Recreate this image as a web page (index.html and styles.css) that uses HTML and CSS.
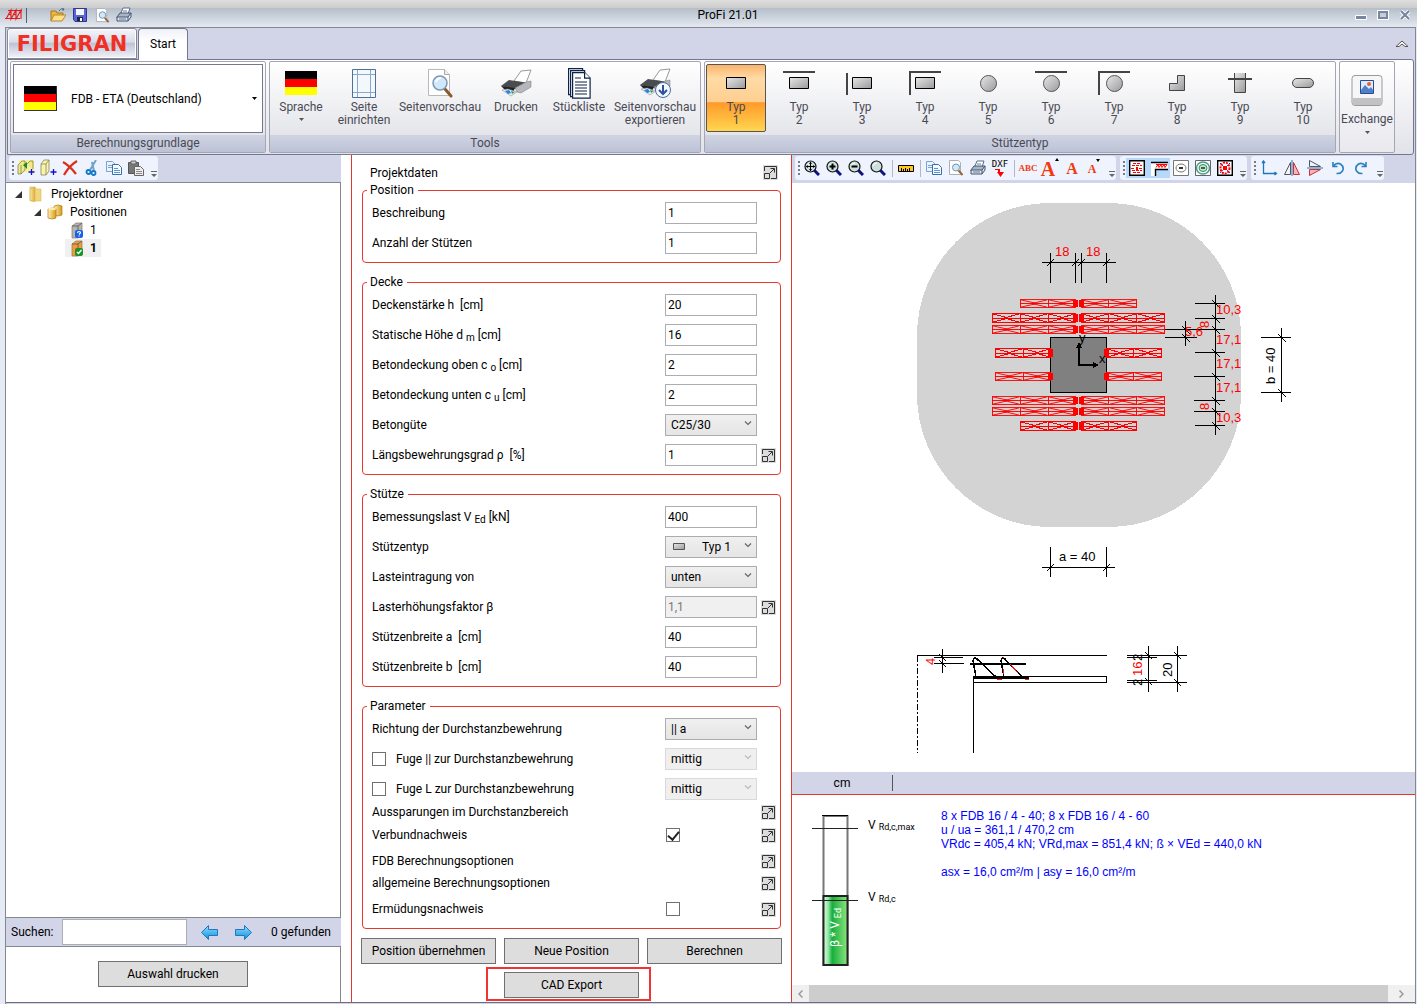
FILE: index.html
```html
<!DOCTYPE html>
<html lang="de">
<head>
<meta charset="utf-8">
<title>ProFi 21.01</title>
<link rel="stylesheet" href="styles.css">
</head>
<body>
<svg class="defs" aria-hidden="true">
  <defs>
    <linearGradient id="steel" x1="0" y1="0" x2="1" y2="1"><stop offset="0" stop-color="#e8e8e8"/><stop offset="1" stop-color="#999"/></linearGradient>
    <linearGradient id="gold" x1="0" x2="1"><stop offset="0" stop-color="#fff0b0"/><stop offset="1" stop-color="#d79a1c"/></linearGradient>
    <linearGradient id="bluearrow" x1="0" y1="0" x2="0" y2="1"><stop offset="0" stop-color="#8edcff"/><stop offset="1" stop-color="#0d8fe0"/></linearGradient>
    <linearGradient id="green" x1="0" x2="1"><stop offset="0" stop-color="#e2ffe8"/><stop offset=".2" stop-color="#8fe8a0"/><stop offset=".36" stop-color="#18ae3e"/><stop offset="1" stop-color="#8be57d"/></linearGradient>
  </defs>
  <symbol id="flag" viewBox="0 0 32 24"><path fill="#000" d="M0 0h32v8H0z"/><path fill="red" d="M0 8h32v8H0z"/><path fill="#ff0" d="M0 16h32v8H0z"/></symbol>
  <symbol id="expand" viewBox="0 0 15 15"><path fill="#dcdcdc" d="M0 0h15v15H0z"/><path fill="none" stroke="#333" d="M1.500 6V1.500h12v12H8M1.500 8.500h5v5h-5zM7 8l4-4M7.500 3.500h4v4"/></symbol>
  <symbol id="chev" viewBox="0 0 8 5"><path fill="none" stroke="currentColor" stroke-width="1.200" d="M1 .5l3 3 3-3"/></symbol>
  <symbol id="print" viewBox="0 0 16 16"><path fill="#fff" stroke="#5b6d85" d="M5 6l2-5h7l-2 6"/><path fill="#a8b6c9" stroke="#45566e" d="M1 10l3-4h11l-3 5H1z"/><path fill="#dbe4f0" stroke="#45566e" d="M1 10h11v4H1zM12 10l3-4v4l-3 4"/><path stroke="#6b7d94" d="M7 4h4M3 12h7"/></symbol>
  <symbol id="preview" viewBox="0 0 16 16"><path fill="#fff" stroke="#aab0ba" d="M1.500.5h9l2 2v12h-11z"/><circle cx="8" cy="7.500" r="3.500" fill="#cfe8fa" stroke="#7b93ab"/><path stroke="#9a6235" stroke-width="2" d="M10.500 10.500l4 4.500"/></symbol>
  <symbol id="copy" viewBox="0 0 16 16"><path fill="#eaf4ff" stroke="#7aa4cf" d="M.5 1.500h6l3 3v7h-9z"/><path stroke="#7aa4cf" d="M2 5.500h4M2 7.500h4"/><path fill="#f4faff" stroke="#386fae" d="M6.500 4.500h6l3 3v7h-9z"/><path stroke="#5f94cc" d="M8 8.500h4M8 10.500h6M8 12.500h6"/></symbol>
  <symbol id="lens" viewBox="0 0 16 16"><path stroke="#10108a" stroke-width="3" d="M10 10l5 5"/><circle cx="6.500" cy="6.500" r="5.500" fill="#cde0de" stroke="#111" stroke-width="1.200"/><path fill="none" stroke="#fff" d="M3 6q1-3 4-3"/></symbol>
  <symbol id="bigprint" viewBox="0 0 32 28"><path fill="#fff" stroke="#999" d="M14 12l7-10 10-1-5 13z"/><path fill="#4a4c50" d="M1 17l8-6 19 3-2 4-11 2z"/><path fill="#202226" d="M1 17l14 2-2 4-7-1z"/><path fill="#b4b8bd" stroke="#777" stroke-width=".5" d="M15 19l11-6 5-1v6l-10 6-4-1z"/><path fill="#e3edf7" stroke="#889" stroke-width=".5" d="M2 21l6-1 9 3-6 4z"/><path fill="#2585d8" d="M5 22l4-1 2 3-3 1z"/><path fill="#4a9c4b" d="M11 22l4 1-3 2z"/></symbol>
  <symbol id="vbox" viewBox="0 0 15 17"><path fill="currentColor" stroke="#8a7a55" stroke-width=".7" d="M2 4l4-3h6v12l-4 3H2z"/><path fill="none" stroke="#555" stroke-width=".8" d="M2 4h6v12M8 4l4-3"/></symbol>
  <symbol id="cell" viewBox="0 0 28 10" preserveAspectRatio="none"><path fill="none" stroke="red" d="M0 .5h28M0 9.500h28M0 5h28M.5 0v10M1 1l14 3.500M1 9l14-3.500M27 1L12 5l15 4"/></symbol>
  <symbol id="g2" viewBox="0 0 58 10" preserveAspectRatio="none"><use href="#cell" width="28" height="10"/><use href="#cell" x="28" width="28" height="10"/><path fill="red" d="M53 1h5v8h-5z"/></symbol>
  <symbol id="g3" viewBox="0 0 86 10" preserveAspectRatio="none"><use href="#cell" width="28" height="10"/><use href="#cell" x="28" width="28" height="10"/><use href="#cell" x="56" width="28" height="10"/><path fill="red" d="M81 1h5v8h-5z"/></symbol>
</svg>

<div class="app">
  <header class="titlebar">
    <div class="quick">
      <svg width="18" height="14" viewBox="0 0 18 14"><path fill="none" stroke="#e81818" stroke-width="1.100" d="M3 2.500h14M0 10.500h15M1 11L6 2v9l5-9v9l5-9v9M3 6l3 1M8 6l3 1"/></svg>
      <span class="vline"></span>
      <button class="tool first" aria-label="Öffnen"><svg width="16" height="16" viewBox="0 0 16 16"><path fill="#f0b63a" stroke="#a8741a" d="M1 14V4h5l1 2h6v3"/><path fill="#ffe08a" stroke="#b98a2c" d="M1 14l3-6h12l-4 6z"/><path fill="none" stroke="#47688f" d="M9 4q3-4 5-1l-1-2m1 2h-2"/></svg></button>
      <button class="tool" aria-label="Speichern"><svg width="14" height="14" viewBox="0 0 14 14"><path fill="#5a66d8" stroke="#2f3690" d="M.5.5h13v13H2l-1.500-2z"/><path fill="#f4f6ff" d="M3 1h8v6H3z"/><path fill="#23263f" d="M4 9h6v4H4z"/><path fill="#fff" d="M7 10h2v3H7z"/></svg></button>
      <button class="tool" aria-label="Vorschau"><svg width="15" height="15"><use href="#preview"/></svg></button>
      <button class="tool" aria-label="Drucken"><svg width="16" height="16"><use href="#print"/></svg></button>
    </div>
    <h1>ProFi 21.01</h1>
    <div class="winbtns">
      <button aria-label="Minimieren"><svg width="12" height="10" viewBox="0 0 12 10"><path fill="#76879f" stroke="#fff" d="M.5 5.500h11v4H.5z"/></svg></button>
      <button aria-label="Maximieren"><svg width="12" height="10" viewBox="0 0 12 10"><path fill="none" stroke="#76879f" stroke-width="2" d="M2 2h8v6H2z"/><path fill="none" stroke="#fff" d="M.5.5h11v9H.5z"/></svg></button>
      <button aria-label="Schließen"><svg width="12" height="10" viewBox="0 0 12 10"><path stroke="#fff" stroke-width="4" d="M2 1l8 8M10 1L2 9"/><path stroke="#76879f" stroke-width="2.200" d="M2 1l8 8M10 1L2 9"/></svg></button>
    </div>
  </header>

  <div class="frame">
    <nav class="tabs">
      <button class="logo">FILIGRAN</button>
      <button class="tab">Start</button>
      <button class="collapse" aria-label="Menüband einklappen"><svg width="14" height="8" viewBox="0 0 14 8"><path fill="#fff" stroke="#555" d="M1 6.500l6-5.500 6 5.500h-3L7 4 4 6.500z"/></svg></button>
    </nav>

    <div class="ribbon">
      <section class="group base">
        <div class="flagselect">
          <svg class="flag" width="33" height="25"><use href="#flag"/></svg>
          <select aria-label="Berechnungsgrundlage"><option>FDB - ETA (Deutschland)</option></select>
          <svg class="tri" width="5" height="3"><path d="M0 0h5L2.500 3z"/></svg>
        </div>
        <h2>Berechnungsgrundlage</h2>
      </section>

      <section class="group tools">
        <div class="items">
          <button class="big"><span class="pic"><svg width="32" height="24"><use href="#flag"/></svg></span><span>Sprache</span><svg class="tri" width="5" height="3"><path fill="#555" d="M0 0h5L2.500 3z"/></svg></button>
          <button class="big"><span class="pic"><svg width="24" height="29" viewBox="0 0 24 29"><path fill="#f3f8fd" stroke="#4e6f97" d="M.5.5h23v28H.5z"/><path stroke="#88a8cc" d="M5.500 1v27M18.500 1v27M1 5.500h22M1 23.500h22"/></svg></span><span>Seite</span><span>einrichten</span></button>
          <button class="big wide"><span class="pic"><svg width="26" height="29" viewBox="0 0 26 29"><path fill="#fff" stroke="#b8b8b8" d="M1.500.5h16l5 5v21h-21z"/><path fill="#eee" stroke="#aaa" d="M17.500.5v5h5"/><path stroke="#8b5a2c" stroke-width="3" stroke-linecap="round" d="M18 20l6 7"/><circle cx="13" cy="14" r="7" fill="#cfe8fb" stroke="#7f97ad" stroke-width="1.500"/><path fill="none" stroke="#fff" stroke-width="2" d="M9 13q1-4 5-4"/></svg></span><span>Seitenvorschau</span></button>
          <button class="big"><span class="pic"><svg width="32" height="28"><use href="#bigprint"/></svg></span><span>Drucken</span></button>
          <button class="big"><span class="pic"><svg width="23" height="31" viewBox="0 0 23 31"><g fill="#fff" stroke="#0b2347" stroke-width="1.200"><path d="M.6.6h14v26H.6z"/><path d="M2.600 2.600h14v26h-14z"/><path d="M4.600 4.600h12l5.500 5.500v20H4.600z"/><path d="M16.600 4.600v5.500h5.500M7 10h6M7 14h12M7 17h12M7 20h12M7 23h12M7 26h12"/></g></svg></span><span>Stückliste</span></button>
          <button class="big wide"><span class="pic"><svg width="32" height="30" viewBox="0 0 32 30"><use href="#bigprint" width="32" height="28"/><circle cx="24" cy="22" r="7.500" fill="#f4f8ff" stroke="#4a6a9c"/><path fill="none" stroke="#2b52a0" stroke-width="2" d="M24 17v9M20 22l4 4 4-4"/></svg></span><span>Seitenvorschau</span><span>exportieren</span></button>
        </div>
        <h2>Tools</h2>
      </section>

      <section class="group types">
        <div class="items">
          <button class="big on"><span class="pic"><svg width="32" height="26" viewBox="0 0 32 26"><path fill="url(#steel)" stroke="#000" d="M6.500 7.500h19v11h-19z"/></svg></span><span>Typ</span><span>1</span></button>
          <button class="big"><span class="pic"><svg width="32" height="26" viewBox="0 0 32 26"><path fill="#444" d="M0 1h32v2H0z"/><path fill="url(#steel)" stroke="#000" d="M6.500 7.500h19v11h-19z"/></svg></span><span>Typ</span><span>2</span></button>
          <button class="big"><span class="pic"><svg width="32" height="26" viewBox="0 0 32 26"><path fill="#444" d="M0 3h2v22H0z"/><path fill="url(#steel)" stroke="#000" d="M6.500 7.500h19v11h-19z"/></svg></span><span>Typ</span><span>3</span></button>
          <button class="big"><span class="pic"><svg width="32" height="26" viewBox="0 0 32 26"><path fill="#444" d="M0 1h32v2H2v22H0z"/><path fill="url(#steel)" stroke="#000" d="M6.500 7.500h19v11h-19z"/></svg></span><span>Typ</span><span>4</span></button>
          <button class="big"><span class="pic"><svg width="32" height="26" viewBox="0 0 32 26"><circle cx="16.500" cy="13.500" r="8" fill="url(#steel)" stroke="#555"/></svg></span><span>Typ</span><span>5</span></button>
          <button class="big"><span class="pic"><svg width="32" height="26" viewBox="0 0 32 26"><path fill="#444" d="M0 1h32v2H0z"/><circle cx="16.500" cy="13.500" r="8" fill="url(#steel)" stroke="#555"/></svg></span><span>Typ</span><span>6</span></button>
          <button class="big"><span class="pic"><svg width="32" height="26" viewBox="0 0 32 26"><path fill="#444" d="M0 1h32v2H2v22H0z"/><circle cx="16.500" cy="13.500" r="8" fill="url(#steel)" stroke="#555"/></svg></span><span>Typ</span><span>7</span></button>
          <button class="big"><span class="pic"><svg width="32" height="26" viewBox="0 0 32 26"><path fill="url(#steel)" stroke="#444" d="M16.500 5.500h7v15h-15v-7h8z"/></svg></span><span>Typ</span><span>8</span></button>
          <button class="big"><span class="pic"><svg width="32" height="26" viewBox="0 0 32 26"><path fill="url(#steel)" stroke="#444" d="M10.500 3v19.500h11V3"/><path fill="#444" d="M4 8h24v2H4z"/></svg></span><span>Typ</span><span>9</span></button>
          <button class="big"><span class="pic"><svg width="32" height="26" viewBox="0 0 32 26"><rect x="5.500" y="8.500" width="21" height="9" rx="4.500" fill="url(#steel)" stroke="#444"/></svg></span><span>Typ</span><span>10</span></button>
        </div>
        <h2>Stützentyp</h2>
      </section>

      <button class="group exchange">
        <svg width="32" height="32" viewBox="0 0 32 32"><rect x="1" y=".5" width="30" height="30" rx="3" fill="#f6f6f8" stroke="#9a9a9a"/><path fill="#c2c2c2" d="M1.500 23h29v5q0 2-2 2h-25q-2 0-2-2z"/><path fill="#dcebff" stroke="#2a4a92" d="M9.500 5.500h13v13h-13z"/><path fill="#4f7fc9" d="M10 15l4-5 4 4 2-2 2 3v3H10z"/><circle cx="18" cy="9" r="2" fill="#e8622c"/></svg>
        <span>Exchange</span>
        <svg class="tri" width="5" height="3"><path fill="#555" d="M0 0h5L2.500 3z"/></svg>
      </button>
    </div>

    <main class="main">
      <aside class="side">
        <div class="bars">
          <div class="bar">
            <span class="grip"></span>
            <button class="tool" aria-label="Neues Projekt"><svg width="18" height="18" viewBox="0 0 18 18"><path fill="#f7f29a" d="M2 1h15v12H2z"/><path fill="#f0ea8c" stroke="#7a7540" stroke-width=".7" d="M1 6l4-4h3v9l-4 4H1zM4 6v9M9 6l4-4h3v8"/><path fill="#1a8a2a" d="M6 6l4-3v7z"/><path stroke="#11c" stroke-width="1.300" d="M14.500 10v6M11.500 13h6"/></svg></button>
            <button class="tool" aria-label="Neue Position"><svg width="18" height="18" viewBox="0 0 18 18"><path fill="#f7f3b0" stroke="#8c8650" stroke-width=".8" d="M2 5l3-4h5v11l-3 4H2zM2 5h5v11M7 5l3-4"/><path stroke="#11c" stroke-width="1.300" d="M14.500 10v6M11.500 13h6"/></svg></button>
            <button class="tool" aria-label="Löschen"><svg width="16" height="16" viewBox="0 0 16 16"><path fill="none" stroke="#d9301c" stroke-width="2.200" d="M1 2q7 4 13 12M15 1Q7 6 2 15"/></svg></button>
            <button class="tool" aria-label="Ausschneiden"><svg width="16" height="16" viewBox="0 0 16 16"><path stroke="#6fa3cc" stroke-width="2" d="M12 0L6 10M8 2l2 9"/><g fill="none" stroke="#1378c8" stroke-width="1.800"><circle cx="4.500" cy="12" r="2"/><circle cx="9.500" cy="13" r="2"/></g></svg></button>
            <button class="tool" aria-label="Kopieren"><svg width="16" height="16"><use href="#copy"/></svg></button>
            <button class="tool" aria-label="Einfügen"><svg width="16" height="16" viewBox="0 0 16 16"><path fill="#777" stroke="#555" d="M.5 2.500h10v11H.5z"/><path fill="#ccc" stroke="#666" d="M3 1h5v3H3z"/><path fill="#eee" stroke="#666" d="M6.500 6.500h6l3 3v6h-9z"/><path stroke="#888" d="M8 9.500h4M8 11.500h6M8 13.500h6"/></svg></button>
            <span class="more"><svg width="7" height="7"><path fill="#666" d="M0 0h6v1H0zM0 3h6L3 6z"/></svg></span>
          </div>
        </div>
        <div class="tree">
          <ul>
            <li><div class="node"><svg width="7" height="7"><path fill="#333" d="M7 0v7H0z"/></svg><svg class="nodeicon" width="16" height="17" viewBox="0 0 16 17"><path fill="#f1d77a" stroke="#d8b85a" stroke-width=".6" d="M2 1h5l1 2h5v12H2z"/><path fill="url(#gold)" stroke="#c9a445" stroke-width=".6" d="M2 3l5-2v14l-1 1-4-2z" opacity=".7"/></svg>Projektordner</div>
              <ul>
                <li><div class="node"><svg width="7" height="7"><path fill="#333" d="M7 0v7H0z"/></svg><svg class="nodeicon" width="16" height="16" viewBox="0 0 16 16"><path fill="url(#gold)" stroke="#b27c14" stroke-width=".7" d="M7 2q4-2 8 0v9q-4 2-8 0z"/><path fill="url(#gold)" stroke="#b27c14" stroke-width=".7" d="M1 5q4-2 8 0v9q-4 2-8 0z"/><ellipse cx="5" cy="5" rx="4" ry="1.200" fill="#ffeeb0"/></svg>Positionen</div>
                  <ul class="leaves">
                    <li><div class="node leaf"><svg width="15" height="17" viewBox="0 0 15 17"><use class="gray" href="#vbox" width="15" height="17"/><rect x="5" y="8" width="8" height="8" rx="2" fill="#1662e8"/><path fill="none" stroke="#fff" stroke-width="1.200" d="M7.500 11q0-1.500 1.500-1.500t1.500 1.300L9 12.500M9 13.500v1"/></svg>1</div></li>
                    <li><div class="node leaf chosen"><svg width="15" height="17" viewBox="0 0 15 17"><use class="orange" href="#vbox" width="15" height="17"/><rect x="5" y="8" width="8" height="8" rx="2" fill="#18932a"/><path fill="none" stroke="#fff" stroke-width="1.400" d="M7 12l1.500 1.500L11.500 10"/></svg>1</div></li>
                  </ul>
                </li>
              </ul>
            </li>
          </ul>
        </div>
        <div class="search">
          <label for="q">Suchen:</label><input id="q" type="text">
          <button class="arrow" aria-label="Zurück"><svg width="17" height="15" viewBox="0 0 17 15"><path fill="url(#bluearrow)" stroke="#2278b8" d="M.5 7.500l7-7v4h9v6h-9v4z"/></svg></button>
          <button class="arrow" aria-label="Weiter"><svg width="17" height="15" viewBox="0 0 17 15"><path fill="url(#bluearrow)" stroke="#2278b8" d="M16.500 7.500l-7-7v4h-9v6h9v4z"/></svg></button>
          <span>0 gefunden</span>
        </div>
        <div class="sidefoot"><button class="btn">Auswahl drucken</button></div>
      </aside>

      <form class="form">
        <div class="head"><span>Projektdaten</span><button type="button" class="exp" aria-label="Projektdaten öffnen"><svg width="15" height="15"><use href="#expand"/></svg></button></div>

        <fieldset>
          <legend>Position</legend>
          <div class="row"><label for="f1">Beschreibung</label><input id="f1" type="text" value="1"></div>
          <div class="row"><label for="f2">Anzahl der Stützen</label><input id="f2" type="text" value="1"></div>
        </fieldset>

        <fieldset>
          <legend>Decke</legend>
          <div class="row"><label for="f3">Deckenstärke h &nbsp;[cm]</label><input id="f3" type="text" value="20"></div>
          <div class="row"><label for="f4">Statische Höhe d <sub>m</sub> [cm]</label><input id="f4" type="text" value="16"></div>
          <div class="row"><label for="f5">Betondeckung oben c <sub>o</sub> [cm]</label><input id="f5" type="text" value="2"></div>
          <div class="row"><label for="f6">Betondeckung unten c <sub>u</sub> [cm]</label><input id="f6" type="text" value="2"></div>
          <div class="row"><label for="f7">Betongüte</label><span class="sel"><select id="f7"><option>C25/30</option></select><svg width="8" height="5"><use href="#chev"/></svg></span></div>
          <div class="row"><label for="f8">Längsbewehrungsgrad ρ &nbsp;[%]</label><input id="f8" type="text" value="1"><button type="button" class="exp" aria-label="Details"><svg width="15" height="15"><use href="#expand"/></svg></button></div>
        </fieldset>

        <fieldset>
          <legend>Stütze</legend>
          <div class="row"><label for="f9">Bemessungslast V <sub>Ed</sub> [kN]</label><input id="f9" type="text" value="400"></div>
          <div class="row"><label for="f10">Stützentyp</label><span class="sel pict"><svg class="mini" width="12" height="8"><path fill="url(#steel)" stroke="#555" d="M.5.5h11v6H.5z"/></svg><select id="f10"><option>Typ 1</option></select><svg width="8" height="5"><use href="#chev"/></svg></span></div>
          <div class="row"><label for="f11">Lasteintragung von</label><span class="sel"><select id="f11"><option>unten</option></select><svg width="8" height="5"><use href="#chev"/></svg></span></div>
          <div class="row"><label for="f12">Lasterhöhungsfaktor β</label><input id="f12" type="text" value="1,1" disabled><button type="button" class="exp" aria-label="Details"><svg width="15" height="15"><use href="#expand"/></svg></button></div>
          <div class="row"><label for="f13">Stützenbreite a &nbsp;[cm]</label><input id="f13" type="text" value="40"></div>
          <div class="row"><label for="f14">Stützenbreite b &nbsp;[cm]</label><input id="f14" type="text" value="40"></div>
        </fieldset>

        <fieldset>
          <legend>Parameter</legend>
          <div class="row"><label for="f15">Richtung der Durchstanzbewehrung</label><span class="sel"><select id="f15"><option>|| a</option></select><svg width="8" height="5"><use href="#chev"/></svg></span></div>
          <div class="row"><label class="check"><input type="checkbox">Fuge || zur Durchstanzbewehrung</label><span class="sel off"><select aria-label="Lage Fuge parallel" disabled><option>mittig</option></select><svg width="8" height="5"><use href="#chev"/></svg></span></div>
          <div class="row"><label class="check"><input type="checkbox">Fuge L zur Durchstanzbewehrung</label><span class="sel off"><select aria-label="Lage Fuge quer" disabled><option>mittig</option></select><svg width="8" height="5"><use href="#chev"/></svg></span></div>
          <div class="row tight"><span>Aussparungen im Durchstanzbereich</span><button type="button" class="exp" aria-label="Details"><svg width="15" height="15"><use href="#expand"/></svg></button></div>
          <div class="row"><label for="f18">Verbundnachweis</label><input id="f18" type="checkbox" checked><button type="button" class="exp" aria-label="Details"><svg width="15" height="15"><use href="#expand"/></svg></button></div>
          <div class="row short"><span>FDB Berechnungsoptionen</span><button type="button" class="exp" aria-label="Details"><svg width="15" height="15"><use href="#expand"/></svg></button></div>
          <div class="row short"><span>allgemeine Berechnungsoptionen</span><button type="button" class="exp" aria-label="Details"><svg width="15" height="15"><use href="#expand"/></svg></button></div>
          <div class="row"><label for="f19">Ermüdungsnachweis</label><input id="f19" type="checkbox"><button type="button" class="exp" aria-label="Details"><svg width="15" height="15"><use href="#expand"/></svg></button></div>
        </fieldset>

        <div class="actions">
          <button type="button" class="btn">Position übernehmen</button>
          <button type="button" class="btn">Neue Position</button>
          <button type="button" class="btn">Berechnen</button>
        </div>
        <div class="cad"><button type="button" class="btn">CAD Export</button></div>
      </form>

      <section class="view">
        <div class="bars">
          <div class="bar">
            <span class="grip"></span>
            <button class="tool" aria-label="Alles zeigen"><svg width="16" height="16" viewBox="0 0 16 16"><use href="#lens" width="16" height="16"/><path stroke="#000" d="M2 6.500h9M6.500 2v9"/><path d="M6.500 2l1.500 2H5zM6.500 11L8 9H5zM2 6.500L4 5v3zM11 6.500L9 5v3z"/></svg></button>
            <button class="tool" aria-label="Vergrößern"><svg width="16" height="16" viewBox="0 0 16 16"><use href="#lens" width="16" height="16"/><path stroke="#000" stroke-width="2" d="M3.500 6.500h6M6.500 3.500v6"/></svg></button>
            <button class="tool" aria-label="Verkleinern"><svg width="16" height="16" viewBox="0 0 16 16"><use href="#lens" width="16" height="16"/><path stroke="#000" stroke-width="2" d="M3.500 6.500h6"/></svg></button>
            <button class="tool" aria-label="Zoom"><svg width="16" height="16"><use href="#lens"/></svg></button>
            <span class="sep"></span>
            <button class="tool" aria-label="Messen"><svg width="16" height="9" viewBox="0 0 16 9"><path fill="#ffc81e" stroke="#000" d="M.5 1.500h15v6H.5z"/><path stroke="#000" d="M3.500 4v3M5.500 5v2M7.500 4v3M9.500 5v2M11.500 4v3"/></svg></button>
            <span class="sep"></span>
            <button class="tool" aria-label="Kopieren"><svg width="16" height="16"><use href="#copy"/></svg></button>
            <button class="tool" aria-label="Vorschau"><svg width="16" height="16"><use href="#preview"/></svg></button>
            <button class="tool" aria-label="Drucken"><svg width="16" height="16"><use href="#print"/></svg></button>
            <button class="tool dxf">DXF<svg width="10" height="8"><path fill="red" d="M0 0h5v3h4L5.500 8 2 3h1V1H0z"/></svg></button>
            <span class="sep"></span>
            <button class="tool abc">ABC</button>
            <button class="tool letter xl">A<svg width="4" height="14"><path d="M2 0l2 3H0z"/></svg></button>
            <button class="tool letter md">A</button>
            <button class="tool letter sm">A<svg width="4" height="14"><path d="M0 1h4L2 4z"/></svg></button>
            <span class="more"><svg width="7" height="7"><path fill="#666" d="M0 0h6v1H0zM0 3h6L3 6z"/></svg></span>
          </div>
          <div class="bar">
            <span class="grip"></span>
            <button class="tool lit" aria-label="Grundriss"><svg width="16" height="16" viewBox="0 0 16 16"><path fill="#fff" stroke="#000" stroke-width="1.400" d="M.7.700h14.600v14.600H.7z"/><path stroke="red" stroke-dasharray="3 1" d="M4 3.500h8M3 5.500h10M2 8.500h4M10 8.500h4M3 10.500h10M4 12.500h8"/><path fill="red" d="M7 7h2v3H7z"/></svg></button>
            <button class="tool lit" aria-label="Schnitt"><svg width="17" height="16" viewBox="0 0 17 16"><path fill="#fff" d="M0 3h17v6H5v7H0z"/><path fill="none" stroke="#000" stroke-width="1.400" d="M0 2.500h17M4.500 16V9.500H17"/><path fill="none" stroke="red" d="M5 4.500h11M5 7.500l2-3 1 3 2-3 1 3 2-3 1 3 2-3"/></svg></button>
            <button class="tool" aria-label="Rundschnitt"><svg width="16" height="16" viewBox="0 0 16 16"><path fill="#fff" stroke="#777" d="M.5.5h15v15H.5z"/><ellipse cx="8" cy="8" rx="5" ry="4" fill="none" stroke="#777"/><path stroke="#333" stroke-width="2" d="M6 8h4"/></svg></button>
            <button class="tool" aria-label="Bereiche"><svg width="16" height="16" viewBox="0 0 16 16"><path fill="#fff" stroke="#666" d="M.5.5h15v15H.5z"/><ellipse cx="8" cy="8" rx="6.500" ry="6" fill="none" stroke="#4a9a8a" stroke-width="1.500"/><ellipse cx="8" cy="8" rx="4" ry="3.500" fill="#b9e8c4" stroke="#2a8f60"/><path fill="#555" d="M6 7h4v2H6z"/></svg></button>
            <button class="tool" aria-label="Bewehrung"><svg width="16" height="16" viewBox="0 0 16 16"><path fill="#fff" stroke="#000" stroke-width="1.400" d="M.7.700h14.600v14.600H.7z"/><path stroke="#22c" stroke-dasharray="2 1" d="M3 3l10 10M13 3L3 13"/><ellipse cx="8" cy="8" rx="4.500" ry="5.500" fill="none" stroke="red" stroke-width="2" stroke-dasharray="2 1"/><path fill="red" d="M6 6h4v4H6z"/></svg></button>
            <span class="more"><svg width="7" height="7"><path fill="#666" d="M0 0h6v1H0zM0 3h6L3 6z"/></svg></span>
          </div>
          <div class="bar roomy">
            <span class="grip"></span>
            <button class="tool" aria-label="Ursprung"><svg width="17" height="16" viewBox="0 0 17 16"><path fill="none" stroke="#1e78b8" stroke-width="1.300" d="M2.500 1v12.500H15M1 3l1.500-2L4 3M13.500 12l2 1.500-2 1.500"/></svg></button>
            <button class="tool" aria-label="Horizontal spiegeln"><svg width="16" height="16" viewBox="0 0 16 16"><path fill="none" stroke="#555" d="M6.500 2.500v12h-6z"/><path fill="#f6b4b8" stroke="#c8323c" d="M9.500 2.500v12h6z"/><path stroke="#1e78b8" d="M8 0v16"/></svg></button>
            <button class="tool" aria-label="Vertikal spiegeln"><svg width="16" height="16" viewBox="0 0 16 16"><path fill="none" stroke="#555" d="M2.500 6.500h11l-11-6z"/><path fill="#f6b4b8" stroke="#c8323c" d="M2.500 9.500h11l-11 6z"/><path stroke="#1e78b8" d="M0 8h16"/></svg></button>
            <button class="tool" aria-label="Rückgängig"><svg width="14" height="14" viewBox="0 0 14 14"><path fill="none" stroke="#2a80c0" stroke-width="1.600" d="M2 1v4.500h4.500M2.500 5q3-4 7-2 4 3 2 7-2 3-6 2.500"/></svg></button>
            <button class="tool" aria-label="Wiederholen"><svg width="14" height="14" viewBox="0 0 14 14"><path fill="none" stroke="#2a80c0" stroke-width="1.600" d="M12 1v4.500H7.500M11.500 5q-3-4-7-2-4 3-2 7 2 3 6 2.500"/></svg></button>
            <span class="more"><svg width="7" height="7"><path fill="#666" d="M0 0h6v1H0zM0 3h6L3 6z"/></svg></span>
          </div>
        </div>

        <div class="canvas">
          <svg class="drawing" viewBox="792 183 623 589" role="img" aria-label="Grundriss und Schnitt der Stütze">
            <rect x="917" y="203" width="324" height="324" rx="133" fill="#d3d3d3"/>
            <g>
              <rect x="1050.500" y="337.500" width="56" height="55" fill="#808080" stroke="#000"/>
              <use href="#g2" x="1020" y="299" width="58" height="9"/><use href="#g3" x="992" y="313" width="86" height="10"/><use href="#g3" x="992" y="325" width="86" height="9"/>
              <use href="#g2" x="995" y="348" width="58" height="10"/><use href="#g2" x="995" y="372" width="58" height="9"/>
              <use href="#g3" x="992" y="396" width="86" height="9"/><use href="#g3" x="992" y="407" width="86" height="9"/><use href="#g2" x="1020" y="421" width="58" height="10"/>
            </g>
            <g transform="matrix(-1 0 0 1 2157 0)">
              <use href="#g2" x="1020" y="299" width="58" height="9"/><use href="#g3" x="992" y="313" width="86" height="10"/><use href="#g3" x="992" y="325" width="86" height="9"/>
              <use href="#g2" x="995" y="348" width="58" height="10"/><use href="#g2" x="995" y="372" width="58" height="9"/>
              <use href="#g3" x="992" y="396" width="86" height="9"/><use href="#g3" x="992" y="407" width="86" height="9"/><use href="#g2" x="1020" y="421" width="58" height="10"/>
            </g>
            <path d="M1078 365V348h-2l3-6 3 6h-2v16h13v-2l6 3-6 3v-2h-15z"/>
            <g class="ln">
              <path d="M1042 262.500h74M1050.500 253v30M1075.500 253v30M1081.500 253v30M1106.500 253v30"/>
              <path d="M1047 266l7-7M1072 266l7-7M1078 266l7-7M1103 266l7-7"/>
              <path d="M1215.500 295v140M1195 303.500h30M1195 318.500h30M1165 329.500h60M1195 352.500h30M1194 376.500h31M1194 400.500h31M1194 411.500h31M1195 425.500h30"/>
              <path d="M1212 300l8 8M1212 315l8 8M1212 326l8 8M1212 349l8 8M1212 373l8 8M1212 397l8 8M1212 408l8 8M1212 422l8 8"/>
              <path d="M1185.500 321v25M1165 337.500h32M1182 326l8 8M1182 334l8 8"/>
              <path d="M1281.500 328v74M1261 337.500h30M1261 392.500h30M1278 334l8 8M1278 389l8 8"/>
              <path d="M1042 567.500h73M1050.500 547v30M1106.500 547v30M1047 571l7-7M1103 571l7-7"/>
              <path stroke-dasharray="6 2 2 2" d="M917.500 656v97"/>
              <path d="M917 655.500h190M973.500 753v-76.500h133v6h-133"/>
              <path d="M942.500 649v24M934 657.500h29M934 663.500h30M939 654l7 7M939 660l7 7"/>
              <path d="M1148.500 646v46M1177.500 646v46M1127 655.500h60M1127 657.500h30M1127 680.500h30M1127 682.500h60M1145 652l7 7M1145 678l7 7M1174 652l7 7M1174 679l7 7"/>
            </g>
            <g fill="none" stroke="#000" stroke-width="1.500">
              <path stroke-width="2" d="M970 664h56"/>
              <path d="M976 677l-3-16q1-5 4-2l19 18M1004 677l-3-16q1-5 4-2l18 19"/>
              <path stroke-width="3" d="M973 677.500h56"/>
              <path stroke="#e22" d="M997 679.500h5M1025 679.500h4M1003 657l1 1M1010 664l8 9M1003 669l1 5" stroke-width="1"/>
            </g>
            <g class="red">
              <text x="1055" y="256">18</text><text x="1086" y="256">18</text>
              <text x="1216" y="314">10,3</text><text x="1216" y="344">17,1</text><text x="1216" y="368">17,1</text><text x="1216" y="392">17,1</text><text x="1216" y="422">10,3</text>
              <text x="1185" y="336">5,6</text>
              <text transform="translate(1209 328) rotate(-90)">8</text><text transform="translate(1209 410) rotate(-90)">8</text>
              <text transform="translate(935 665) rotate(-90)">4</text><text transform="translate(1142 676) rotate(-90)">16</text>
            </g>
            <g>
              <text x="1059" y="561">a = 40</text><text transform="translate(1275 384) rotate(-90)">b = 40</text>
              <text x="1079" y="342">y</text><text x="1099" y="363">x</text>
              <text transform="translate(1142 661) rotate(-90)">2</text><text transform="translate(1142 686) rotate(-90)">2</text>
              <text transform="translate(1172 677) rotate(-90)">20</text>
            </g>
          </svg>
        </div>

        <div class="status"><span>cm</span></div>

        <div class="results">
          <svg class="gauge" width="110" height="152" viewBox="0 0 110 152">
            <path fill="#fff" stroke="#777" stroke-width="2" d="M11.500 1h24v149h-24z"/>
            <path fill="url(#green)" stroke="#222" stroke-width="2" d="M11.500 81h24v69h-24z"/>
            <path stroke="#000" d="M10 .5h26"/>
            <path stroke="#222" stroke-width="1" d="M0 13.500h46M0 85.500h46"/>
            <text x="56" y="14">V <tspan class="subs" dy="1">Rd,c,max</tspan></text>
            <text x="56" y="86">V <tspan class="subs" dy="1">Rd,c</tspan></text>
            <text class="load" transform="translate(27 132) rotate(-90)">β * V <tspan class="subs" dy="2">Ed</tspan></text>
          </svg>
          <p>8 x FDB 16 / 4 - 40; 8 x FDB 16 / 4 - 60<br>u / ua = 361,1 / 470,2 cm<br>VRdc = 405,4 kN; VRd,max = 851,4 kN; ß × VEd = 440,0 kN<br><br>asx = 16,0 cm²/m | asy = 16,0 cm²/m</p>
        </div>
        <div class="scroll">
          <button aria-label="Nach links"><svg width="5" height="8"><path fill="none" stroke="#999" stroke-width="1.500" d="M4.500.5L1 4l3.500 3.500"/></svg></button>
          <div class="thumb"></div>
          <button aria-label="Nach rechts"><svg width="5" height="8"><path fill="none" stroke="#999" stroke-width="1.500" d="M.5.5L4 4 .5 7.500"/></svg></button>
        </div>
      </section>
    </main>
  </div>
</div>
</body>
</html>
```
FILE: styles.css
```css
* { box-sizing: border-box; }
body { margin: 0; font: 12px/16px Roboto, "Open Sans", sans-serif; color: #000; background: #e6eaf4; }
button, input, select { font: inherit; color: inherit; margin: 0; padding: 0; border-radius: 0; }
button { border: 0; background: none; }
select { appearance: none; border: 0; background: none; }
h1, h2, p, ul { margin: 0; padding: 0; font: inherit; list-style: none; }
svg { display: block; flex: none; }
.defs { position: absolute; width: 0; height: 0; }

.app { display: flex; flex-direction: column; min-height: 100vh; padding: 0 1px 0 5px; }

/* title bar */
.titlebar { display: grid; grid-template-columns: 140px 1fr 100px; align-items: center; height: 27px; margin: 0 -1px 0 -5px; padding: 3px 6px 0 5px;
  background: linear-gradient(#dedede 0, #cccccc 8px, #b5bfc9 8px, #e4e8f1 27px); }
.titlebar h1 { text-align: center; }
.quick { display: flex; align-items: center; }
.vline { width: 1px; height: 15px; margin-left: 3px; background: #555f70; }
.tool.first { margin-left: 20px; }
.winbtns { display: flex; gap: 10px; justify-content: flex-end; }

.frame { display: flex; flex-direction: column; flex: 1; border: 1px solid #85878f; border-bottom: 0; background: #d2d5e8; }

/* tabs */
.tabs { display: flex; gap: 1px; height: 31px; padding: 0 4px 0 1px; }
.logo { width: 130px; border: 1px solid #85859c; border-radius: 3px 3px 0 0; background: linear-gradient(#f4f5fa, #d9dbe8 45%, #bfc3d6 50%, #f2f3f9);
  box-shadow: inset 0 0 0 1px #fff; font: bold 21px/20px "DejaVu Sans", sans-serif; color: #ee3124; }
.tab { z-index: 1; width: 50px; height: 32px; padding-bottom: 1px; border: 1px solid #76768f; border-bottom: 0; border-radius: 4px 4px 0 0; background: linear-gradient(#eef1f8, #fff 40%); }
.collapse { margin-left: auto; padding-right: 2px; }

/* ribbon */
.ribbon { display: flex; gap: 3px; height: 96px; margin: 0 1px; padding: 1px 2px; border: 1px solid #76768f; border-radius: 0 3px 3px 0; background: linear-gradient(#fff, #e2e3ea); color: #4a4a55; }
.group { display: flex; flex-direction: column; border: 1px solid #a5a6b4; border-radius: 2px; background: linear-gradient(#fff, #e4e5ea 74px); overflow: hidden; }
.group h2 { height: 17px; background: linear-gradient(#d0d4e2, #bcc2d6); line-height: 17px; text-align: center; }
.base { width: 256px; }
.tools { width: 432px; }
.types { width: 632px; }
.flagselect { display: flex; align-items: center; flex: 1; margin: 2px; padding: 0 5px 0 10px; border: 1px solid #76768f; background: #fff; color: #000; }
.flag { border: solid #333; border-width: 0 1px 1px 0; }
.flagselect select { flex: 1; padding-left: 14px; }
.items { display: flex; flex: 1; gap: 3px; padding: 2px 1px; }
.big { display: flex; flex-direction: column; align-items: center; justify-content: flex-start; width: 60px; height: 68px; border: 1px solid transparent; line-height: 13px; white-space: nowrap; }
.big.wide { width: 86px; }
.pic { display: flex; align-items: center; justify-content: center; height: 36px; }
.big .tri { margin-top: 4px; }
.big.on { border-color: #555; border-radius: 2px; background: linear-gradient(#fbb36b, #ffdba6 20%, #ffcf90 56%, #ff9a2a 57%, #ffd650); }
.exchange { align-items: center; justify-content: center; gap: 4px; width: 56px; padding: 0 0 5px; background: linear-gradient(#fff, #e8e8ee); white-space: nowrap; }

/* work area */
.main { display: grid; grid-template-columns: 345px 440px minmax(0, 1fr); flex: 1; border-bottom: 1px solid #6e6e78; margin-bottom: 1px; background: #fff; }
.bars { display: flex; flex-wrap: wrap; gap: 4px; padding: 1px 3px 3px; background: #d2d5e8; }
.side .bars { padding-bottom: 2px; }
.bar { display: flex; align-items: center; height: 24px; padding-left: 3px; border-radius: 3px; background: #eef3fd; }
.roomy { gap: 1px; }
.grip { width: 3px; height: 15px; background: repeating-linear-gradient(#7a7a85 0 2px, transparent 2px 4px) 0 0 / 2px 100% no-repeat; }
.tool { display: flex; align-items: center; justify-content: center; width: 22px; height: 20px; }
.lit { background: #b5d8fb; }
.sep { width: 1px; height: 17px; margin: 0 2px 0 3px; background: #b4b8c2; }
.more { align-self: flex-end; width: 11px; padding: 0 0 2px 4px; }
.dxf { flex-direction: column; align-items: center; justify-content: center; font: 9px/9px "DejaVu Sans Mono", monospace; }
.abc { font: bold 9px/12px "Liberation Serif", serif; color: #f03a10; }
.letter { align-items: flex-end; font: bold 20px/18px "Liberation Serif", serif; color: #f03a10; }
.letter svg { align-self: flex-start; }
.letter.md { font-size: 16px; }
.letter.sm { font-size: 12px; }

.side { display: flex; flex-direction: column; margin-right: 10px; }
.tree { flex: 1; padding: 2px 9px; border: 1px solid #85878f; border-left: 0; }
.tree ul ul { padding-left: 19px; }
.node { display: flex; align-items: center; height: 18px; }
.nodeicon { margin: 0 7px 0 6px; }
.tree .leaves { padding-left: 31px; }
.leaf { gap: 5px; width: 36px; padding-left: 5px; }
.chosen { background: #f0f0f0; font-weight: bold; }
.gray { color: #b4b4b4; }
.orange { color: #f59a3c; }
.search { display: flex; align-items: center; height: 28px; padding: 0 10px 0 5px; background: #d2d5e8; white-space: nowrap; }
.search label { width: 51px; }
.search input { width: 125px; height: 26px; border: 1px solid #abadb3; background: #fff; }
.arrow { margin-left: 14px; }
.arrow + .arrow { margin-left: 17px; }
.search span { margin-left: auto; }
.sidefoot { height: 56px; padding-top: 14px; border: solid #85878f; border-width: 1px 1px 0 0; text-align: center; }
.btn { height: 26px; border: 1px solid #707070; background: #ddd; white-space: nowrap; }
.sidefoot .btn { width: 150px; }

/* data form */
.form { padding: 8px 9px 0; border-left: 1px solid #e03a30; }
.head { display: flex; align-items: center; justify-content: space-between; height: 19px; padding: 0 4px 0 9px; }
fieldset { min-width: 0; margin: 0 1px 11px; padding: 0 4px 4px 9px; border: 1px solid #e8382e; border-radius: 4px; }
legend { height: 16px; margin-left: -5px; padding: 0 4px 0 3px; }
.row { display: grid; grid-template-columns: minmax(0, 1fr) 92px 19px; align-items: center; height: 30px; white-space: nowrap; }
.short { height: 22px; }
.tight { height: 16px; }
sub { font-size: 10px; line-height: 0; vertical-align: -2px; }
.row > input[type="text"] { width: 92px; height: 22px; padding: 0 2px; border: 1px solid #abadb3; background: #fff; }
.row > input:disabled { background: #f0f0f0; color: #7a7a7a; }
.exp { grid-column: 3; justify-self: end; }
.sel { display: grid; align-items: center; height: 22px; border: 1px solid #acacac; background: linear-gradient(#f0f0f0, #e5e5e5); color: #666; }
.sel > * { grid-area: 1 / 1; justify-self: end; }
.sel > svg { margin-right: 4px; margin-bottom: 3px; pointer-events: none; }
.sel select { width: 100%; height: 100%; padding-left: 5px; color: #000; opacity: 1; }
.sel .mini { justify-self: start; margin: 0 0 0 7px; }
.pict select { padding-left: 36px; }
.off { border-color: #d9d9d9; background: #efefef; color: #bbb; }
.check { display: flex; align-items: center; gap: 10px; }
input[type="checkbox"] { appearance: none; display: grid; place-items: center; width: 14px; height: 14px; border: 1px solid #707070; background: #fff; }
.row > input[type="checkbox"] { margin-left: 1px; }
input[type="checkbox"]:checked::before { content: ""; width: 5px; height: 9px; margin-bottom: 3px; border: solid #222; border-width: 0 2px 2px 0; transform: rotate(40deg); }
.actions { display: grid; grid-template-columns: repeat(3, 1fr); gap: 8px; margin-top: -2px; }
.cad { width: 165px; margin: 3px 0 0 125px; padding: 3px 10px 1px 16px; border: 2px solid #f03434; }
.cad .btn { width: 135px; }

/* drawing and results */
.view { display: flex; flex-direction: column; min-width: 0; border-left: 1px solid #e03a30; }
.canvas { flex: 1; }
.drawing { width: 100%; font: 13px "Liberation Sans", sans-serif; shape-rendering: crispEdges; }
.ln { fill: none; stroke: #000; }
.red { fill: red; }
.status { display: flex; align-items: center; height: 23px; padding: 3px 0; border-bottom: 1px solid #e03a30; background: #d2d5e8; }
.status span { width: 101px; border-right: 1px solid #555; text-align: center; }
.results { display: flex; gap: 19px; height: 190px; padding: 20px 0 0 20px; }
.gauge { font-size: 12px; }
.subs { font-size: 9px; }
.load { fill: #fff; }
.results p { margin-top: -6px; font: 12px/14px "Liberation Sans", sans-serif; color: #00f; white-space: nowrap; }
.scroll { display: flex; height: 17px; background: #f0f0f0; }
.scroll button { display: grid; place-items: center; width: 17px; }
.thumb { flex: 1; background: #cdcdcd; }
.scroll button:last-child { width: 27px; }
```
